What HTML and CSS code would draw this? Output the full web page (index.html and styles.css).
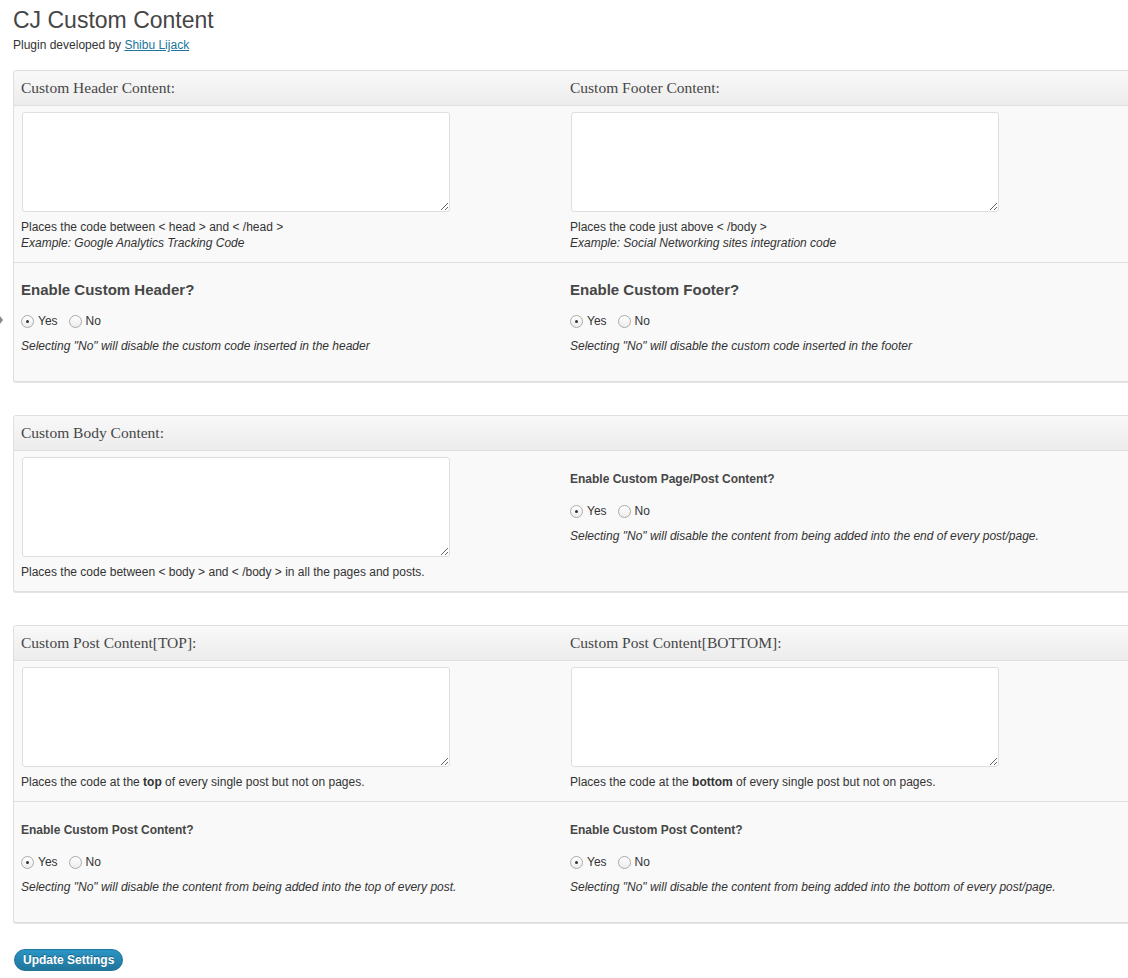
FILE: index.html
```html
<!DOCTYPE html>
<html>
<head>
<meta charset="utf-8">
<title>CJ Custom Content</title>
<link rel="stylesheet" href="styles.css">
</head>
<body>
<span class="menu-arrow"></span>
<div class="wrap">
  <h1 class="title">CJ Custom Content</h1>
  <p class="byline">Plugin developed by <a href="#">Shibu Lijack</a></p>

  <form>
  <div class="box">
    <div class="box-head">
      <div class="cell">Custom Header Content:</div>
      <div class="cell">Custom Footer Content:</div>
    </div>
    <div class="row row-text">
      <div class="cell">
        <textarea></textarea>
        <p class="desc">Places the code between &lt; head &gt; and &lt; /head &gt;<br><em>Example: Google Analytics Tracking Code</em></p>
      </div>
      <div class="cell">
        <textarea></textarea>
        <p class="desc">Places the code just above &lt; /body &gt;<br><em>Example: Social Networking sites integration code</em></p>
      </div>
    </div>
    <div class="row row-opt">
      <div class="cell">
        <h3 class="opt-big">Enable Custom Header?</h3>
        <div class="radios"><label><input type="radio" name="h" checked>Yes</label><label><input type="radio" name="h">No</label></div>
        <p class="note">Selecting "No" will disable the custom code inserted in the header</p>
      </div>
      <div class="cell">
        <h3 class="opt-big">Enable Custom Footer?</h3>
        <div class="radios"><label><input type="radio" name="f" checked>Yes</label><label><input type="radio" name="f">No</label></div>
        <p class="note">Selecting "No" will disable the custom code inserted in the footer</p>
      </div>
    </div>
  </div>

  <div class="box">
    <div class="box-head">
      <div class="cell">Custom Body Content:</div>
      <div class="cell"></div>
    </div>
    <div class="row row-text">
      <div class="cell">
        <textarea></textarea>
        <p class="desc">Places the code between &lt; body &gt; and &lt; /body &gt; in all the pages and posts.</p>
      </div>
      <div class="cell side-opt">
        <h3 class="opt-small">Enable Custom Page/Post Content?</h3>
        <div class="radios"><label><input type="radio" name="b" checked>Yes</label><label><input type="radio" name="b">No</label></div>
        <p class="note">Selecting "No" will disable the content from being added into the end of every post/page.</p>
      </div>
    </div>
  </div>

  <div class="box box-last">
    <div class="box-head">
      <div class="cell">Custom Post Content[TOP]:</div>
      <div class="cell">Custom Post Content[BOTTOM]:</div>
    </div>
    <div class="row row-text">
      <div class="cell">
        <textarea></textarea>
        <p class="desc">Places the code at the <strong>top</strong> of every single post but not on pages.</p>
      </div>
      <div class="cell">
        <textarea></textarea>
        <p class="desc">Places the code at the <strong>bottom</strong> of every single post but not on pages.</p>
      </div>
    </div>
    <div class="row row-opt">
      <div class="cell">
        <h3 class="opt-small">Enable Custom Post Content?</h3>
        <div class="radios"><label><input type="radio" name="t" checked>Yes</label><label><input type="radio" name="t">No</label></div>
        <p class="note">Selecting "No" will disable the content from being added into the top of every post.</p>
      </div>
      <div class="cell">
        <h3 class="opt-small">Enable Custom Post Content?</h3>
        <div class="radios"><label><input type="radio" name="p" checked>Yes</label><label><input type="radio" name="p">No</label></div>
        <p class="note">Selecting "No" will disable the content from being added into the bottom of every post/page.</p>
      </div>
    </div>
  </div>

  <button type="button" class="btn">Update Settings</button>
  </form>
</div>
</body>
</html>
```
FILE: styles.css
```css
html {
  overflow: hidden;
  background: #fff;
}
body {
  margin: 0;
  font-family: "Liberation Sans", Arial, sans-serif;
  font-size: 12px;
  color: #333;
  position: relative;
}
.menu-arrow {
  position: absolute;
  left: 0;
  top: 316px;
  width: 0;
  height: 0;
  border-top: 4px solid transparent;
  border-bottom: 4px solid transparent;
  border-left: 3px solid #8a8a8a;
}
.wrap {
  padding: 6px 0 0 13px;
}
.title {
  margin: 0;
  font-size: 23px;
  font-weight: normal;
  line-height: 29px;
  color: #464646;
}
.byline {
  margin: 2px 0 0;
  line-height: 16px;
  color: #333;
}
.byline a {
  color: #21759b;
  text-decoration: underline;
}
.box {
  width: 1140px;
  margin-top: 17px;
  margin-bottom: 33px;
  border: 1px solid #dfdfdf;
  border-radius: 3px;
  background: #f9f9f9;
  box-shadow: 0 1px 0 #e4e4e4;
}
.box + .box {
  margin-top: 0;
}
.box-last {
  margin-bottom: 26px;
}
.box-head {
  display: grid;
  grid-template-columns: 549px 1fr;
  height: 34px;
  align-items: center;
  background: linear-gradient(#f9f9f9, #ececec);
  border-bottom: 1px solid #dfdfdf;
  border-radius: 3px 3px 0 0;
  font-family: "Liberation Serif", Georgia, serif;
  font-size: 15.5px;
  color: #464646;
}
.box-head .cell {
  padding: 0 7px;
}
.row {
  display: grid;
  grid-template-columns: 549px 1fr;
}
.row .cell {
  padding: 0 8px;
}
.row-text .cell {
  padding-top: 6px;
  padding-bottom: 11px;
}
.row-opt {
  border-top: 1px solid #dfdfdf;
}
.row-opt .cell {
  padding-top: 17px;
  padding-bottom: 27px;
}
.box-last .row-opt .cell {
  padding-bottom: 27px;
}
textarea {
  display: block;
  width: 428px;
  height: 100px;
  box-sizing: border-box;
  margin: 0;
  border: 1px solid #dfdfdf;
  border-radius: 3px;
  background: #fff;
  font-family: "Liberation Mono", monospace;
  font-size: 12px;
  resize: both;
}
.desc {
  margin: 7px 0 0 -1px;
  line-height: 16px;
  color: #333;
}
.desc em {
  font-style: italic;
}
.opt-big {
  margin: 0 0 0 -1px;
  font-size: 15px;
  line-height: 20px;
  font-weight: bold;
  color: #464646;
}
.opt-small {
  margin: 0 0 0 -1px;
  font-size: 12px;
  line-height: 16px;
  font-weight: bold;
  color: #464646;
}
.row-opt .opt-small {
  margin-top: 3px;
}
.side-opt {
  padding-top: 20px !important;
}
.radios {
  display: flex;
  gap: 12px;
  height: 20px;
  align-items: center;
  margin-top: 11px;
  font-size: 12px;
  color: #333;
}
.opt-small + .radios {
  margin-top: 14px;
}
.radios label {
  display: flex;
  align-items: center;
  gap: 4px;
  margin-left: -1px;
}
input[type="radio"] {
  appearance: none;
  -webkit-appearance: none;
  margin: 0;
  width: 13px;
  height: 13px;
  border: 1px solid #aaa;
  border-radius: 50%;
  background: linear-gradient(#ffffff, #ececec);
  box-sizing: border-box;
  display: grid;
  place-content: center;
}
input[type="radio"]:checked::before {
  content: "";
  width: 3px;
  height: 3px;
  border-radius: 50%;
  background: #333;
}
.note {
  margin: 7px 0 0 -1px;
  line-height: 16px;
  font-style: italic;
  color: #333;
}
.btn {
  display: block;
  margin: 0 0 0 1px;
  height: 22px;
  padding: 0 8px;
  border: 1px solid #21759b;
  border-radius: 11px;
  background: linear-gradient(#2a95c5, #21759b);
  color: #fff;
  font-family: "Liberation Sans", Arial, sans-serif;
  font-size: 12px;
  font-weight: bold;
  text-shadow: 0 -1px 0 rgba(0, 0, 0, 0.3);
  cursor: pointer;
}
```
